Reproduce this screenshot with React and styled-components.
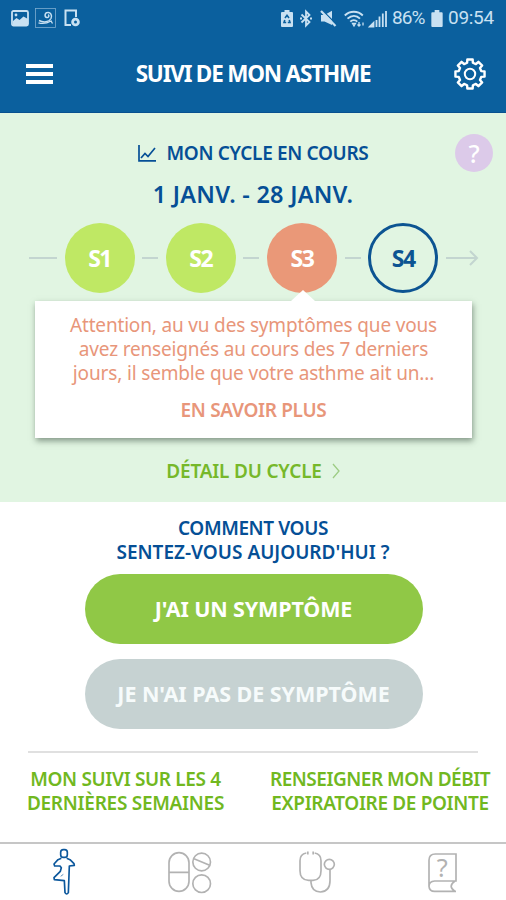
import React from "react";
import styled, { createGlobalStyle } from "styled-components";

const Global = createGlobalStyle`
  * { box-sizing: border-box; }
  body { margin: 0; background: #fff; }
  button { border: 0; padding: 0; background: none; font: inherit; color: inherit; }
  svg { display: block; flex: none; overflow: visible; }
`;

const Screen = styled.div`
  width: 506px;
  height: 900px;
  display: flex;
  flex-direction: column;
  background: #fff;
  overflow: hidden;
  font-family: "Noto Sans", "Open Sans", sans-serif;
  font-weight: 600;
`;

const Header = styled.header`
  flex: none;
  height: 113px;
  background: #0b609e;
  border-bottom: 1px solid #08508f;
  color: #fff;
`;

const StatusBar = styled.div`
  height: 36px;
  padding: 0 11px;
  display: flex;
  justify-content: space-between;
  align-items: center;
  color: #c9e1f2;
`;

const StatusGroup = styled.div`
  display: flex;
  align-items: center;
  gap: ${(p) => p.$gap}px;
`;

const StatusText = styled.span`
  width: ${(p) => p.$width}px;
  font: 400 19px/24px Roboto, sans-serif;
  letter-spacing: ${(p) => p.$ls}px;
  white-space: nowrap;
`;

const AppBar = styled.div`
  height: 75px;
  padding: 0 20px 0 26px;
  display: grid;
  grid-template-columns: 40px 1fr 46px;
  align-items: center;
  justify-items: center;

  & > svg { justify-self: end; }
`;

const Burger = styled.button`
  width: 27px;
  height: 20px;
  justify-self: start;
  display: flex;
  flex-direction: column;
  justify-content: space-between;
`;

const BurgerLine = styled.span`
  height: 4px;
  background: #fff;
`;

const Line = styled.span`
  display: block;
  font-size: ${(p) => p.$size}px;
  line-height: ${(p) => p.$lh || 24}px;
  letter-spacing: ${(p) => p.$ls || 0}px;
  white-space: nowrap;
`;

const Title = styled.h1`
  margin: 0;
  font-weight: 700;
`;

const Cycle = styled.section`
  flex: none;
  height: 389px;
  background: #e1f5e2;
  padding-top: 21px;
  color: #054f96;
  display: flex;
  flex-direction: column;
`;

const CycleHead = styled.div`
  height: 38px;
  padding: 0 13px;
  display: grid;
  grid-template-columns: 1fr auto 1fr;
  align-items: center;
`;

const CycleTitle = styled.div`
  grid-column: 2;
  display: flex;
  align-items: center;
  gap: 11px;
`;

const Help = styled.button`
  justify-self: end;
  width: 38px;
  height: 38px;
  border-radius: 50%;
  background: #dccae9;
  color: #fff;
  font-size: 25px;
  font-weight: 500;
  line-height: 36px;
`;

const Period = styled.div`
  margin-top: 7px;
  text-align: center;
`;

const Weeks = styled.div`
  margin-top: 14px;
  padding-left: 28.5px;
  height: 70px;
  display: flex;
  align-items: center;
  gap: 7.6px;
`;

const Dash = styled.span`
  width: ${(p) => p.$width}px;
  height: 2px;
  background: #c3d5d0;
`;

const weekTones = {
  good: "background: #bfe864; color: #fff;",
  alert: "background: #ea9878; color: #fff;",
  next: "border: 3px solid #0c5492; color: #0c5492;",
};

const Week = styled.div`
  width: 70px;
  height: 70px;
  border-radius: 50%;
  display: flex;
  align-items: center;
  justify-content: center;
  font-weight: 700;
  ${(p) => weekTones[p.$tone]}
`;

const Notice = styled.article`
  position: relative;
  width: 437px;
  height: 137px;
  margin: 8px 0 0 35px;
  padding-top: 12px;
  background: #fff;
  box-shadow: 1px 3px 6px rgba(40, 60, 45, 0.5);
  color: #e8967a;
  text-align: center;
  font-weight: 400;

  &::before {
    content: "";
    position: absolute;
    left: 256px;
    top: -11px;
    border: 12px solid transparent;
    border-top: 0;
    border-bottom: 11px solid #fff;
  }
`;

const More = styled.button`
  margin-top: 13px;
  font-weight: 600;
`;

const Detail = styled.button`
  margin: 21px auto 0;
  height: 24px;
  display: flex;
  align-items: center;
  gap: 10px;
  color: #76b82a;
`;

const Feeling = styled.section`
  flex: none;
  padding-top: 14px;
  display: flex;
  flex-direction: column;
  align-items: center;
`;

const Question = styled.h2`
  margin: 0 0 10px;
  font-weight: 600;
  color: #054f96;
  text-align: center;
`;

const Answer = styled.button`
  width: 338px;
  height: 70px;
  margin: 0 0 14.5px 1px;
  border-radius: 35px;
  background: ${(p) => (p.$muted ? "#c6d2d2" : "#90c846")};
  color: ${(p) => (p.$muted ? "#f6fbfb" : "#fff")};
  font-weight: 700;
`;

const Rule = styled.hr`
  flex: none;
  width: 450px;
  height: 2px;
  margin: 8px 0 0 28px;
  border: 0;
  background: #e0e0e0;
`;

const Links = styled.div`
  flex: none;
  margin: 0 13px 0 24px;
  padding-top: 14px;
  display: flex;
  justify-content: space-between;
`;

const Link = styled.a`
  color: #71b81f;
  text-align: center;
  width: ${(p) => p.$width}px;
`;

const Nav = styled.nav`
  flex: none;
  height: 58px;
  margin-top: auto;
  padding-left: 1px;
  border-top: 2px solid #c6c6c6;
  display: grid;
  grid-template-columns: repeat(4, 1fr);
  align-items: start;
  justify-items: center;
`;

const NavItem = styled.button`
  padding-top: ${(p) => p.$top}px;
  color: ${(p) => (p.$active ? "#0b579c" : "#b2b2b2")};
`;

const QuestionGlyph = styled.text`
  font: 400 76px "Noto Sans", sans-serif;
  fill: currentColor;
  stroke: none;
`;

const PictureIcon = () => (
  <svg width="18" height="17" viewBox="0 0 18 17">
    <rect x="1" y="1" width="16" height="14.5" rx="1.5" fill="none" stroke="currentColor" strokeWidth="1.8" />
    <path d="M2 15V11l3.500-3 3 2 4-3.500L17 9v6z" fill="currentColor" />
    <circle cx="5" cy="5" r="1.400" fill="currentColor" />
  </svg>
);

const WindIcon = () => (
  <svg width="21" height="20" viewBox="0 0 21 20" fill="none" stroke="currentColor">
    <rect x=".5" y=".5" width="20" height="19" strokeWidth=".8" opacity=".6" />
    <path d="M4 12.500c5 2.500 10 1.500 12-2 1.500-3-.5-6.500-3.500-6-3 .4-3.300 4.500-.5 5 2 .2 2.500-2.200 1-2.700" strokeWidth="1.500" />
    <path d="M3.500 14.800c5 1.500 9 .2 12.500-1.800l1.500 2.500" strokeWidth="1.300" />
  </svg>
);

const DeviceIcon = () => (
  <svg width="17" height="18" viewBox="0 0 17 18" fill="none" stroke="currentColor">
    <path d="M12 8V1.500H1.500v14.500H7" strokeWidth="2" />
    <circle cx="11.500" cy="13" r="2.900" strokeWidth="2.800" />
  </svg>
);

const EcoBatteryIcon = () => (
  <svg width="12" height="17" viewBox="0 0 12 17">
    <path d="M3.500 0h5v2H11q1 0 1 1v13q0 1-1 1H1q-1 0-1-1V3q0-1 1-1h2.500z" fill="currentColor" />
    <path d="M4 8L6 5.300 8 8M3.800 10L3 12.500h2.200M8.200 10l.8 2.500H6.800" fill="none" stroke="#0b609e" strokeWidth="1.600" />
  </svg>
);

const BluetoothIcon = () => (
  <svg width="12" height="17" viewBox="0 0 12 17" fill="none" stroke="currentColor" strokeWidth="1.800">
    <path d="M1.500 4.500l8 7.500L6 15.500v-14L9.500 5l-8 7.500" />
    <path d="M0 8.500h2M10 8.500h2" />
  </svg>
);

const MuteIcon = () => (
  <svg width="17" height="17" viewBox="0 0 17 17" fill="currentColor">
    <path d="M1 5h3.500L12 .8V15L4.500 11.500H1z" />
    <path d="M2 0L16.500 14.500" stroke="#0b609e" strokeWidth="1.400" />
    <path d="M1 1L15.500 16" stroke="currentColor" strokeWidth="2.200" />
  </svg>
);

const WifiIcon = () => (
  <svg width="21" height="17" viewBox="0 0 21 17" fill="none" stroke="currentColor" strokeWidth="1.900">
    <path d="M.8 5.500c5-5 13-5 18 0M3.500 8.600c4-3.500 9-3.500 12.500 0M6.300 11.600c2-2 5-2 7 0" />
    <path d="M8.500 13.500h3L10 16zM15 12v4M13.500 14.500L15 16l1.500-1.500M19 15.500v-3" strokeWidth="1.300" />
  </svg>
);

const SignalIcon = () => (
  <svg width="17" height="17" viewBox="0 0 17 17" fill="none" stroke="currentColor" strokeWidth="1.800">
    <path d="M0 16.500L3.500 13v3.500zM6.500 17v-7M9.500 17V6.500M12.800 17V3.500M16 17V1" />
  </svg>
);

const BatteryIcon = () => (
  <svg width="12" height="17" viewBox="0 0 12 18" fill="currentColor">
    <path d="M3.500 0h5v2.500H11q1 0 1 1V17q0 1-1 1H1q-1 0-1-1V3.500q0-1 1-1h2.500z" />
  </svg>
);

const GearIcon = () => {
  const teeth = [];
  for (let i = 0; i < 8; i++) {
    const base = (i * Math.PI) / 4 - Math.PI / 2;
    [[-0.25, 11.6], [-0.18, 14.8], [0.18, 14.8], [0.25, 11.6]].forEach(([d, r]) =>
      teeth.push(`${(r * Math.cos(base + d)).toFixed(2)} ${(r * Math.sin(base + d)).toFixed(2)}`)
    );
  }
  return (
    <svg width="32" height="32" viewBox="-16 -16 32 32" fill="none" stroke="#fff" strokeWidth="2.400" strokeLinejoin="round">
      <path d={`M${teeth.join("L")}Z`} />
      <circle r="5.200" strokeWidth="2" />
    </svg>
  );
};

const ChartIcon = () => (
  <svg width="18" height="17" viewBox="0 0 18 17" fill="none" stroke="currentColor" strokeWidth="1.700">
    <path d="M1 0v15.800h17M3 13l4-4.500 3 3L17 3" />
  </svg>
);

const ArrowIcon = () => (
  <svg width="32" height="16" viewBox="0 0 32 16" fill="none" stroke="#c3d5d0" strokeWidth="2">
    <path d="M0 8h31M24 1l7 7-7 7" />
  </svg>
);

const ChevronIcon = () => (
  <svg width="8" height="16" viewBox="0 0 8 16" fill="none" stroke="#9dcc84" strokeWidth="1.300">
    <path d="M1 1l6 7-6 7" />
  </svg>
);

const PersonIcon = () => (
  <svg width="24" height="48" viewBox="155 25 72 144" fill="none" stroke="currentColor" strokeWidth="5" strokeLinejoin="round">
    <rect x="181" y="30" width="20" height="23" rx="8" />
    <path d="M183 56L173 60 161 73 163 79 179 79 183 84 180 95 161 114 162 120 192 123 194 159Q199 167 204 159L207 79 222 77 221 72 209 60 199 56" />
    <path d="M181 110l8-6" strokeWidth="2" />
  </svg>
);

const PillsIcon = () => (
  <svg width="44" height="40" viewBox="507 35 132 120" fill="none" stroke="currentColor" strokeWidth="5">
    <rect x="510" y="37" width="60" height="116" rx="30" />
    <path d="M510 96h60M585 55l47 20" />
    <circle cx="608" cy="65" r="26.500" />
    <circle cx="608" cy="130" r="26.500" />
  </svg>
);

const StethoscopeIcon = () => (
  <svg width="36" height="42" viewBox="138 33 108 126" fill="none" stroke="currentColor" strokeWidth="5">
    <path d="M160 39C147 41 141 50 141 62V92Q141 120 167 121H180Q204 120 204 92V62C204 50 198 41 185 39" />
    <path d="M162 39h5M178 39h5" strokeWidth="9" />
    <path d="M174 121V128Q176 155 202 156 231 154 231 122V89" />
    <circle cx="229" cy="73" r="15" />
  </svg>
);

const BookIcon = () => (
  <svg width="29" height="40" viewBox="528 38 87 120" fill="none" stroke="currentColor" strokeWidth="5">
    <path d="M531 137V60Q531 41 550 41H612V122H548Q531 123 531 138 532 153 548 153H612M609 122Q586 138 609 153" />
    <QuestionGlyph x="554" y="111">?</QuestionGlyph>
  </svg>
);

const weeks = [
  { name: "S1", tone: "good" },
  { name: "S2", tone: "good" },
  { name: "S3", tone: "alert" },
  { name: "S4", tone: "next" },
];

export default function App() {
  return (
    <Screen>
      <Global />
      <Header>
        <StatusBar>
          <StatusGroup $gap={8}>
            <StatusGroup $gap={6}>
              <PictureIcon />
              <WindIcon />
            </StatusGroup>
            <DeviceIcon />
          </StatusGroup>
          <StatusGroup $gap={5}>
            <StatusGroup $gap={7.5}>
              <EcoBatteryIcon />
              <BluetoothIcon />
              <MuteIcon />
              <WifiIcon />
            </StatusGroup>
            <SignalIcon />
            <StatusText $width={34} $ls={-0.9}>86%</StatusText>
            <BatteryIcon />
            <StatusText $width={47} $ls={-0.3}>09:54</StatusText>
          </StatusGroup>
        </StatusBar>
        <AppBar>
          <Burger aria-label="Menu">
            <BurgerLine />
            <BurgerLine />
            <BurgerLine />
          </Burger>
          <Title>
            <Line $size={22.5} $ls={-1.2}>SUIVI DE MON ASTHME</Line>
          </Title>
          <GearIcon />
        </AppBar>
      </Header>

      <Cycle>
        <CycleHead>
          <CycleTitle>
            <ChartIcon />
            <Line $size={19} $ls={-0.34}>MON CYCLE EN COURS</Line>
          </CycleTitle>
          <Help>?</Help>
        </CycleHead>
        <Period>
          <Line $size={23.5} $lh={30} $ls={0.25}>1 JANV. - 28 JANV.</Line>
        </Period>
        <Weeks>
          <Dash $width={28.5} />
          {weeks.map((week, i) => (
            <React.Fragment key={week.name}>
              {i > 0 && <Dash $width={16} />}
              <Week $tone={week.tone}>
                <Line $size={23} $ls={-1.5}>{week.name}</Line>
              </Week>
            </React.Fragment>
          ))}
          <ArrowIcon />
        </Weeks>
        <Notice>
          <Line $size={19} $ls={-0.17}>Attention, au vu des symptômes que vous</Line>
          <Line $size={19} $ls={-0.17}>avez renseignés au cours des 7 derniers</Line>
          <Line $size={19} $ls={-0.15}>jours, il semble que votre asthme ait un...</Line>
          <More>
            <Line $size={19} $ls={-0.33}>EN SAVOIR PLUS</Line>
          </More>
        </Notice>
        <Detail>
          <Line $size={19} $ls={-0.2}>DÉTAIL DU CYCLE</Line>
          <ChevronIcon />
        </Detail>
      </Cycle>

      <Feeling>
        <Question>
          <Line $size={19} $ls={-0.4}>COMMENT VOUS</Line>
          <Line $size={19}>SENTEZ-VOUS AUJOURD'HUI ?</Line>
        </Question>
        <Answer>
          <Line $size={21.5} $ls={-0.15}>J'AI UN SYMPTÔME</Line>
        </Answer>
        <Answer $muted>
          <Line $size={21.5} $ls={-0.05}>JE N'AI PAS DE SYMPTÔME</Line>
        </Answer>
      </Feeling>
      <Rule />
      <Links>
        <Link $width={203}>
          <Line $size={19} $ls={-0.35}>MON SUIVI SUR LES 4</Line>
          <Line $size={19} $ls={-0.28}>DERNIÈRES SEMAINES</Line>
        </Link>
        <Link $width={226}>
          <Line $size={19} $ls={-0.5}>RENSEIGNER MON DÉBIT</Line>
          <Line $size={19} $ls={-0.36}>EXPIRATOIRE DE POINTE</Line>
        </Link>
      </Links>

      <Nav>
        <NavItem $active $top={4}><PersonIcon /></NavItem>
        <NavItem $top={8}><PillsIcon /></NavItem>
        <NavItem $top={7}><StethoscopeIcon /></NavItem>
        <NavItem $top={9}><BookIcon /></NavItem>
      </Nav>
    </Screen>
  );
}
